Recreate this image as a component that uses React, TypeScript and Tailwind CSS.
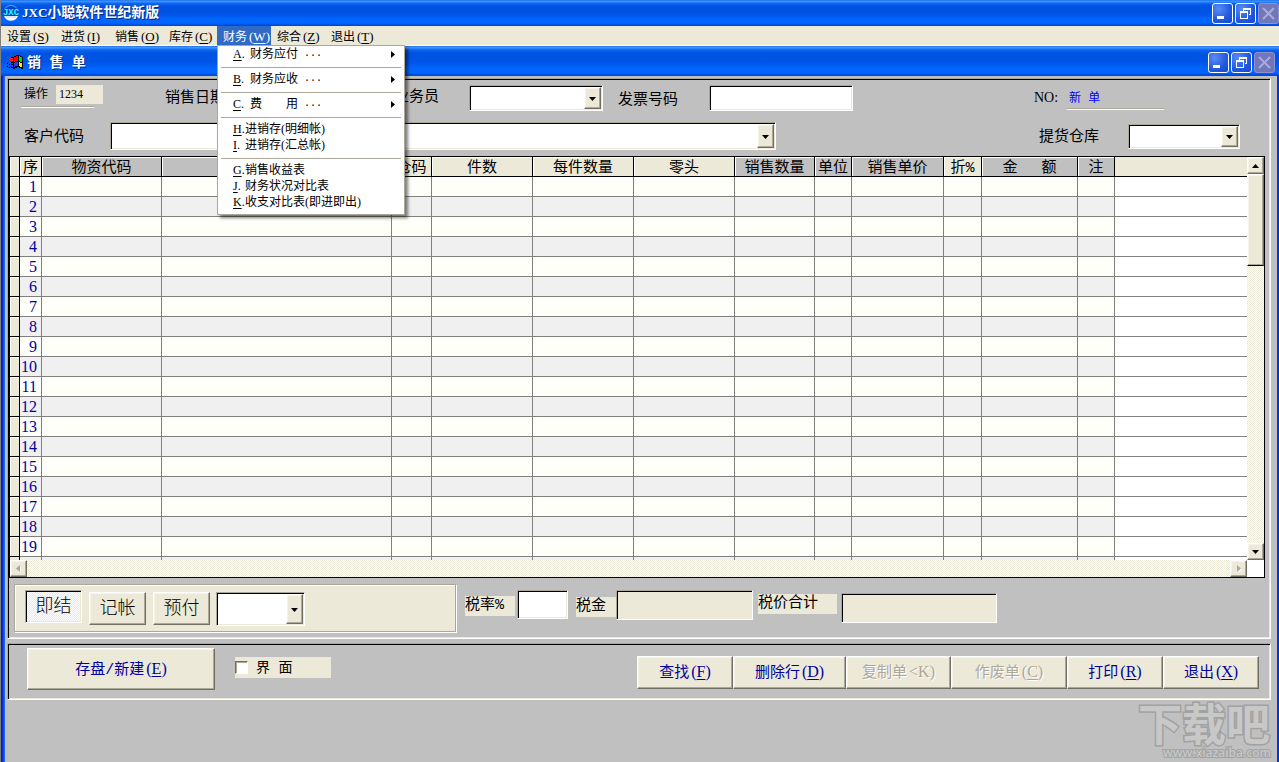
import React from "react";

const SUNKEN =
  "border border-t-[#aca899] border-l-[#aca899] border-r-white border-b-white shadow-[inset_1px_1px_0_#000,inset_-1px_-1px_0_#ece9d8]";
const RAISED =
  "bg-[#ece9d8] border border-t-white border-l-white border-r-[#716f64] border-b-[#716f64] shadow-[inset_-1px_-1px_0_#aca899,inset_1px_1px_0_#f6f4ea]";
const DITHER =
  "bg-[repeating-conic-gradient(#fff_0_25%,#ece9d8_0_50%)] bg-[length:2px_2px]";
const TITLE_BAR =
  "bg-[linear-gradient(to_bottom,#1c6fe8_0,#3d95ff_5%,#0a62f0_14%,#0053e0_25%,#0055e8_55%,#0066ff_75%,#0066ff_88%,#0043cf_100%)]";

const MENUS = [
  { label: "设置", key: "S" },
  { label: "进货", key: "I" },
  { label: "销售", key: "O" },
  { label: "库存", key: "C" },
  { label: "财务", key: "W" },
  { label: "综合", key: "Z" },
  { label: "退出", key: "T" },
];

const FINANCE_GROUPS = [
  [{ key: "A", label: "财务应付", sub: true }],
  [{ key: "B", label: "财务应收", sub: true }],
  [{ key: "C", label: "费　　用", sub: true }],
  [
    { key: "H", label: "进销存(明细帐)", sub: false },
    { key: "I", label: "进销存(汇总帐)", sub: false },
  ],
  [
    { key: "G", label: "销售收益表", sub: false },
    { key: "J", label: "财务状况对比表", sub: false },
    { key: "K", label: "收支对比表(即进即出)", sub: false },
  ],
];

const COLUMNS = [
  { title: "物资代码", width: 120, gray: true },
  { title: "", width: 230, gray: true },
  { title: "仓码", width: 40, gray: false },
  { title: "件数", width: 101, gray: false },
  { title: "每件数量", width: 101, gray: false },
  { title: "零头", width: 101, gray: false },
  { title: "销售数量", width: 80, gray: true },
  { title: "单位", width: 37, gray: true },
  { title: "销售单价", width: 92, gray: true },
  { title: "折%", width: 38, gray: false },
  { title: "金　\u00a0额", width: 96, gray: true },
  { title: "注", width: 37, gray: true },
];

const ROWS = Array.from({ length: 19 }, (_, i) => i + 1);

const ACTIONS = [
  { label: "查找", key: "F", width: "w-24", disabled: false },
  { label: "删除行", key: "D", width: "w-[113px]", disabled: false },
  { label: "复制单", key: "K", width: "w-[105px]", disabled: true, open: "<" },
  { label: "作废单", key: "C", width: "w-[116px]", disabled: true },
  { label: "打印", key: "R", width: "w-24", disabled: false },
  { label: "退出", key: "X", width: "w-24", disabled: false },
];

function Hotkey({ letter, open = "(" }: { letter: string; open?: string }) {
  return (
    <span className="ml-0.5 text-base leading-none font-['Liberation_Serif',serif]">
      {open}
      {open === "(" ? <u className="underline-offset-2">{letter}</u> : letter})
    </span>
  );
}

function Triangle({ dir, muted = false }: { dir: "up" | "down" | "left" | "right"; muted?: boolean }) {
  const points = {
    up: "0,6 7,6 3.5,2",
    down: "0,2 7,2 3.5,6",
    left: "5,0 5,7 1,3.5",
    right: "2,0 2,7 6,3.5",
  };
  return (
    <svg className="w-[7px] h-[7px]" viewBox="0 0 7 7" aria-hidden="true">
      {muted && <polygon points={points[dir]} fill="#fff" transform="translate(1 1)" />}
      <polygon points={points[dir]} fill={muted ? "#aca899" : "#000"} />
    </svg>
  );
}

function DropDown({ label, className }: { label: string; className: string }) {
  return (
    <div className={`relative shrink-0 bg-white p-0.5 ${SUNKEN} ${className}`}>
      <select aria-label={label} className="block w-full h-full appearance-none bg-transparent px-1 outline-none text-xs">
        <option></option>
      </select>
      <span
        className={`absolute top-px right-px bottom-px w-[17px] flex items-center justify-center pointer-events-none ${RAISED}`}
      >
        <Triangle dir="down" />
      </span>
    </div>
  );
}

function WindowButtons() {
  const base =
    "w-[21px] h-[21px] rounded-[3px] border border-white bg-[radial-gradient(circle_at_30%_25%,#5a8cf5,#2158e0_60%,#1746c8)] flex items-center justify-center";
  return (
    <div className="flex gap-0.5">
      <button aria-label="最小化" className={base}>
        <svg className="w-[19px] h-[19px]" viewBox="0 0 19 19">
          <rect x="4" y="12" width="7" height="3" fill="#fff" />
        </svg>
      </button>
      <button aria-label="还原" className={base}>
        <svg className="w-[19px] h-[19px]" viewBox="0 0 19 19" fill="#fff">
          <path d="M7 4h8v7h-2v-1h1V6H8v1H7z" />
          <path d="M4 7h8v8H4zM5 9v5h6V9z" fillRule="evenodd" />
        </svg>
      </button>
      <button
        aria-label="关闭"
        disabled
        className="w-[21px] h-[21px] rounded-[3px] border border-[#8f92cf] bg-[#7276ba] flex items-center justify-center"
      >
        <svg className="w-[19px] h-[19px]" viewBox="0 0 19 19">
          <path d="M4 4l11 11M15 4l-11 11" stroke="#a9abdc" strokeWidth="2" />
        </svg>
      </button>
    </div>
  );
}

function AppIcon() {
  return (
    <svg className="w-4 h-4" viewBox="0 0 16 16" aria-hidden="true">
      <circle cx="8" cy="8" r="7.5" fill="#0a3fd0" />
      <path d="M1 11a7.5 7.5 0 0 0 14 0z" fill="#fff" />
      <path d="M3 12h10" stroke="#c0c8e8" />
      <path d="M2 3.500a7.500 7.500 0 0 1 12 0" stroke="#28c8f8" fill="none" />
      <text x="8" y="10" fontSize="9" fontWeight="bold" textAnchor="middle" fill="#2ff" fontFamily="Liberation Mono">
        JXC
      </text>
    </svg>
  );
}

function FlagIcon() {
  return (
    <svg className="w-4 h-4" viewBox="0 0 16 16" shapeRendering="crispEdges" aria-hidden="true">
      <path d="M7 2h2V1h4v1h2v1h1v12h-2v-1h-2v-1h-2v1H8v1H6V3h1z" fill="#000" />
      <path d="M7 3h2V2h2v5H8v1H7z" fill="#f00" />
      <path d="M12 2h1v1h2v5h-2V7h-1z" fill="#0d0" />
      <path d="M7 9h1V8h3v4H8v1H7z" fill="#33f" />
      <path d="M12 8h1v1h2v4h-2v-1h-1z" fill="#fe0" />
      <path d="M0 3h1v1H0zM2 3h1v1H2zM3 4h3v1H3zM0 6h1v1H0zM2 5h1v1H2zM3 6h3v1H3zM2 8h1v1H2z" fill="#f22" />
      <path d="M4 3h2v1H4zM4 8h2v1H4zM0 9h1v1H0zM2 10h1v1H2zM4 10h2v1H4zM0 12h1v1H0zM2 13h1v1H2zM4 13h2v1H4z" fill="#000" />
      <path d="M3 9h3v1H3zM2 12h4v1H2z" fill="#33f" />
    </svg>
  );
}

function FinanceMenu() {
  return (
    <div
      role="menu"
      className="absolute left-0 top-[19px] z-20 w-[188px] bg-white text-black border border-[#aca899] pb-1 shadow-[3px_3px_3px_rgba(0,0,0,0.5)] font-['Liberation_Serif','Noto_Sans_CJK_SC',serif]"
    >
      {FINANCE_GROUPS.map((group, g) => (
        <div key={g}>
          {g > 0 && (
            <div className="h-[9px] pt-[5px] px-[3px]">
              <div className="border-t border-[#aca899]" />
            </div>
          )}
          {group.map((item) => (
            <button
              key={item.key}
              role="menuitem"
              className="flex items-center w-full h-4 pl-[15px] pr-2 text-xs leading-4 whitespace-pre text-left"
            >
              <span className="w-3 shrink-0">
                <u className="underline-offset-2">{item.key}</u>.
              </span>
              <span className={item.sub ? "ml-[5px]" : ""}>{item.label}</span>
              {item.sub && (
                <>
                  <span className="ml-[6px] text-[10px] font-['Liberation_Mono',monospace]">...</span>
                  <span className="ml-auto">
                    <Triangle dir="right" />
                  </span>
                </>
              )}
            </button>
          ))}
        </div>
      ))}
    </div>
  );
}

function MenuBar() {
  return (
    <nav className="flex bg-[#ece9d8] h-5 border-b border-white text-xs">
      {MENUS.map((m) => {
        const open = m.label === "财务";
        return (
          <div key={m.key} className="relative">
            <button
              className={`w-[54px] h-[19px] pt-0.5 pl-[6px] leading-[17px] text-left whitespace-nowrap font-['Liberation_Serif','Noto_Sans_CJK_SC',serif] ${
                open ? "bg-[#316ac5] text-white" : ""
              }`}
            >
              {m.label}
              <span className="ml-0.5 text-[13px]">
                (<u className="underline-offset-2">{m.key}</u>)
              </span>
            </button>
            {open && <FinanceMenu />}
          </div>
        );
      })}
    </nav>
  );
}

function OrderHeader() {
  return (
    <div className="text-[15px] leading-5 whitespace-nowrap">
      <div className="flex items-start h-10">
        <div className="ml-3 mt-[5px] shrink-0">
          <div className="flex text-xs leading-[19px]">
            <span className="w-[35px] pl-[3px] pt-px">操作</span>
            <span className="w-[47px] h-[19px] pl-[3px] bg-[#ece9d8] leading-[18px] font-['Liberation_Serif',serif]">1234</span>
          </div>
          <div className="w-[73px] mt-px h-0.5 border-t border-[#aca899] bg-white" />
        </div>
        <label htmlFor="date" className="ml-[62px] mt-[9px]">销售日期</label>
        <input id="date" className={`ml-2 mt-[5px] w-[130px] h-[26px] shrink-0 bg-white ${SUNKEN}`} />
        <span className="ml-[31px] mt-[8px]">业务员</span>
        <DropDown label="业务员" className="ml-[30px] mt-[5px] w-[134px] h-[26px]" />
        <label htmlFor="invoice" className="ml-[15px] mt-[11px]">发票号码</label>
        <input
          id="invoice"
          className={`ml-[31px] mt-[5px] w-36 h-[26px] shrink-0 bg-white px-1 text-xs outline-none ${SUNKEN}`}
        />
        <div className="ml-auto mr-[105px] mt-[8px] flex">
          <span className="w-[33px] text-sm leading-5 font-['Liberation_Serif',serif]">NO:</span>
          <div className="w-[97px]">
            <div className="pl-0.5 pt-0.5 text-xs leading-[18px] text-[#0000ff]">新 单</div>
            <div className="h-0.5 border-t border-[#aca899] bg-white" />
          </div>
        </div>
      </div>
      <div className="flex items-start h-9">
        <span className="ml-[15px] mt-2">客户代码</span>
        <DropDown label="客户代码" className="ml-[26px] mt-0.5 w-[666px] h-7" />
        <span className="ml-auto mt-2">提货仓库</span>
        <DropDown label="提货仓库" className="ml-[29px] mr-[29px] mt-1 w-28 h-[25px]" />
      </div>
    </div>
  );
}

function OrderGrid() {
  const headCell =
    "h-5 pt-1 border-r border-b border-black font-normal leading-[15px] shadow-[inset_1px_1px_0_#fff] whitespace-nowrap";
  return (
    <div className="mr-1 border border-black">
      <div className="flex">
        <div className="flex-1 min-w-0">
          <table className="w-full table-fixed border-separate border-spacing-0 text-[15px]">
            <colgroup>
              <col className="w-[10px]" />
              <col className="w-[22px]" />
              {COLUMNS.map((c, i) => (
                <col key={i} style={{ width: c.width }} />
              ))}
              <col />
            </colgroup>
            <thead>
              <tr>
                <th className={`${headCell} bg-[#ece9d8]`} />
                <th className={`${headCell} bg-[#ece9d8]`}>序</th>
                {COLUMNS.map((c, i) => (
                  <th key={i} className={`${headCell} ${c.gray ? "bg-[#c0c0c0]" : "bg-[#ece9d8]"}`}>
                    {c.title}
                  </th>
                ))}
                <th className="h-5 border-b border-black bg-[#ece9d8]" />
              </tr>
            </thead>
            <tbody>
              {ROWS.map((n) => (
                <tr key={n} className={n % 2 ? "bg-[#fffffa]" : "bg-[#f0f0f0]"}>
                  <td className="h-5 border-r border-b border-black bg-[#ece9d8] shadow-[inset_1px_1px_0_#fff]" />
                  <td className="h-5 border-r border-b border-[#808080] pr-1 text-right text-base leading-[19px] text-[#0000a0] font-['Liberation_Serif',serif]">
                    {n}
                  </td>
                  {COLUMNS.map((c, i) => (
                    <td key={i} className="h-5 border-r border-b border-[#808080]" />
                  ))}
                  <td className="h-5 border-b border-[#808080] bg-white" />
                </tr>
              ))}
              <tr className="bg-[#f0f0f0]">
                <td className="h-[3px] border-r border-black bg-[#ece9d8]" />
                <td className="h-[3px] border-r border-[#808080]" />
                {COLUMNS.map((c, i) => (
                  <td key={i} className="h-[3px] border-r border-[#808080]" />
                ))}
                <td className="h-[3px] bg-white" />
              </tr>
            </tbody>
          </table>
        </div>
        <div className={`w-[17px] flex flex-col ${DITHER}`}>
          <button aria-label="向上" className={`h-[17px] flex items-center justify-center ${RAISED}`}>
            <Triangle dir="up" />
          </button>
          <div className={`h-[92px] border-b-black ${RAISED}`} />
          <button aria-label="向下" className={`mt-auto h-[17px] flex items-center justify-center ${RAISED}`}>
            <Triangle dir="down" />
          </button>
        </div>
      </div>
      <div className="flex h-[17px]">
        <div className={`flex-1 flex justify-between ${DITHER}`}>
          <button aria-label="向左" className={`w-[17px] flex items-center justify-center ${RAISED}`}>
            <Triangle dir="left" muted />
          </button>
          <button aria-label="向右" className={`w-[17px] flex items-center justify-center ${RAISED}`}>
            <Triangle dir="right" muted />
          </button>
        </div>
        <div className="w-[17px] bg-white" />
      </div>
    </div>
  );
}

function PaymentBar() {
  const tag = "h-5 shrink-0 bg-[#ece9d8]";
  return (
    <div className="flex items-start h-[59px] text-[15px] leading-[19px] whitespace-nowrap">
      <div className="ml-[5px] mt-[6px] w-[442px] h-12 shrink-0 border border-[#aca899] bg-[#ece9d8] shadow-[inset_1px_1px_0_#fff,1px_1px_0_#fff] flex items-start pl-[10px] text-lg font-light">
        <button aria-pressed="true" className={`mt-[5px] w-[57px] h-[33px] ${DITHER} ${SUNKEN}`}>即结</button>
        <button className={`ml-[7px] mt-[7px] w-[57px] h-[33px] ${RAISED}`}>记帐</button>
        <button className={`ml-[7px] mt-[7px] w-[57px] h-[33px] ${RAISED}`}>预付</button>
        <DropDown label="付款方式" className="ml-[6px] mt-[7px] w-[89px] h-[34px]" />
      </div>
      <label htmlFor="rate" className={`ml-[9px] mt-[18px] w-[50px] ${tag}`}>税率%</label>
      <input id="rate" className={`ml-0.5 mt-3 w-[51px] h-[29px] shrink-0 bg-white px-1 text-xs outline-none ${SUNKEN}`} />
      <label htmlFor="tax" className={`ml-2 mt-[19px] w-10 ${tag}`}>税金</label>
      <input
        id="tax"
        readOnly
        className={`mt-3 w-[137px] h-[30px] shrink-0 bg-[#ece9d8] px-1 text-xs outline-none ${SUNKEN}`}
      />
      <label htmlFor="total" className={`ml-[5px] mt-4 w-[79px] ${tag}`}>税价合计</label>
      <input
        id="total"
        readOnly
        className={`ml-1 mt-[15px] w-[156px] h-[30px] shrink-0 bg-[#ece9d8] px-1 text-xs outline-none ${SUNKEN}`}
      />
    </div>
  );
}

function ActionBar() {
  return (
    <div className="flex items-start h-[53px] text-[15px] whitespace-nowrap">
      <button className={`ml-[18px] mt-[3px] w-[188px] h-[42px] pt-1 shrink-0 text-[#0000a0] ${RAISED}`}>
        存盘/新建
        <Hotkey letter="E" />
      </button>
      <label className="ml-5 mt-3 w-24 h-[21px] shrink-0 bg-[#ece9d8] flex items-center text-sm leading-[21px]">
        <input
          type="checkbox"
          className="appearance-none w-[13px] h-[13px] bg-white border border-t-[#716f64] border-l-[#716f64] border-r-white border-b-white shadow-[inset_1px_1px_0_#aca899]"
        />
        <span className="ml-2 pt-0.5">界 面</span>
      </label>
      <div className="ml-auto mr-[10px] mt-[11px] flex">
        {ACTIONS.map((a) => (
          <button
            key={a.label}
            disabled={a.disabled}
            className={`${a.width} h-[33px] pt-1 shrink-0 ${RAISED} ${
              a.disabled ? "text-[#aca899] [text-shadow:1px_1px_0_#fff]" : "text-[#0000a0]"
            }`}
          >
            {a.label}
            <Hotkey letter={a.key} open={a.open} />
          </button>
        ))}
      </div>
    </div>
  );
}

function Watermark() {
  return (
    <svg className="absolute right-[3px] bottom-0 w-[138px] h-[62px] overflow-visible" viewBox="0 0 138 62">
      <g fill="#c8c8c8" stroke="#a2a2a2" strokeWidth="3" paintOrder="stroke">
        <text x="2" y="41" fontSize="44" fontWeight="bold" fontFamily="Noto Sans CJK SC">下载吧</text>
        <text x="27" y="57" fontSize="12" fontWeight="600" strokeWidth="2" fontFamily="Open Sans">www.xiazaiba.com</text>
      </g>
    </svg>
  );
}

export default function App() {
  return (
    <div className="min-h-screen flex flex-col overflow-hidden border-l border-[#808080] bg-[#c0c0c0] text-black font-['Liberation_Mono','Noto_Sans_CJK_SC',monospace]">
      <header className={`flex items-center h-[26px] pl-0.5 ${TITLE_BAR}`}>
        <AppIcon />
        <h1 className="ml-[3px] text-sm leading-6 font-bold text-white [text-shadow:1px_1px_0_#002a8c]">
          <span className="text-[13px] font-['Liberation_Serif',serif]">JXC</span>小聪软件世纪新版
        </h1>
        <div className="ml-auto">
          <WindowButtons />
        </div>
      </header>
      <MenuBar />
      <main className="flex-1 flex flex-col">
        <div className={`flex items-center h-[30px] pl-[6px] pr-1 pt-0.5 ${TITLE_BAR}`}>
          <FlagIcon />
          <h2 className="ml-1 pt-0.5 text-sm leading-6 font-bold text-white [text-shadow:1px_1px_0_#002a8c]">销 售 单</h2>
          <div className="ml-auto">
            <WindowButtons />
          </div>
        </div>
        <div className="relative flex-1 border-r-2 border-[#0038d8] flex">
          <div className="w-1 shrink-0 bg-[linear-gradient(to_right,#0019cf_25%,#0831d9_25%_50%,#0055e5_50%_75%,#166aee_75%)]" />
          <div className="flex-1 min-w-0 pl-0.5 pt-0.5 pr-[6px]">
            <section className={`p-px ${SUNKEN}`}>
              <OrderHeader />
              <OrderGrid />
              <PaymentBar />
            </section>
            <section className={`mt-1 p-px ${SUNKEN}`}>
              <ActionBar />
            </section>
          </div>
          <Watermark />
        </div>
      </main>
    </div>
  );
}
